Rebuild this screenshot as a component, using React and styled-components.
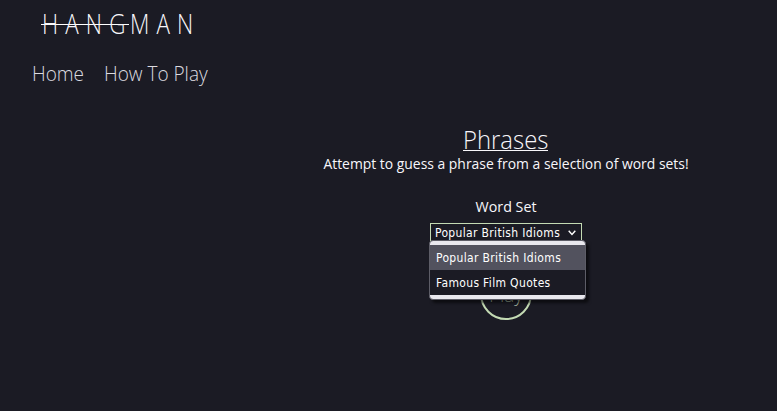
import React from "react";
import styled, { createGlobalStyle } from "styled-components";

const Global = createGlobalStyle`
  * { box-sizing: border-box; }
  body {
    margin: 0;
    background: #1b1b24;
    color: #f8f7fb;
    font-family: "Open Sans", "Noto Sans", sans-serif;
    overflow: hidden;
  }
`;
const Page = styled.div`
  height: 411px;
  display: flex;
  flex-direction: column;
`;
const Header = styled.header`
  height: 126px;
  padding: 4px 0 0 32px;
`;
const Logo = styled.div`
  height: 40px;
  padding-left: 9px;
  display: flex;
  font-size: 27px;
  font-weight: 300;
  line-height: 39px;
`;
const Struck = styled.span`
  width: 88px;
  padding-left: 1px;
  white-space: nowrap;
  background: linear-gradient(#fff, #fff) 0 20px / 100% 1px no-repeat;
`;
const Letters = styled.span`
  display: inline-block;
  letter-spacing: 8.6px;
  transform: scaleX(0.83);
  transform-origin: left;
`;
const Rest = styled.span`
  padding-left: 1px;
`;
const Nav = styled.nav`
  display: flex;
  gap: 21px;
  margin-top: 15px;
  transform: scaleX(0.95);
  transform-origin: left;
`;
const NavLink = styled.a`
  font-size: 20px;
  font-weight: 300;
  line-height: 29px;
  color: #dcdbe0;
  white-space: nowrap;
`;
const Main = styled.main`
  width: 400px;
  margin-left: 306px;
  display: flex;
  flex-direction: column;
  align-items: center;
`;
const Title = styled.h1`
  margin: 0;
  height: 25px;
  font-size: 25px;
  line-height: 27px;
  font-weight: 300;
  border-bottom: 1px solid #f8f7fb;
  transform: scaleX(0.955);
`;
const Text = styled.p`
  margin: ${(p) => p.$top}px 0 0;
  font-size: 15px;
  line-height: 20px;
  white-space: nowrap;
  transform: scaleX(${(p) => p.$squeeze});
`;
const Picker = styled.div`
  position: relative;
  margin-top: 7px;
  width: 152px;
  height: 19px;
  font: 12px/19px "DejaVu Sans Condensed", "DejaVu Sans", sans-serif;
  font-stretch: condensed;
  letter-spacing: 0.34px;
`;
const SelectBox = styled.div`
  height: 19px;
  border: 1px solid #c3dab3;
  padding: 1px 5px 0 4px;
  display: flex;
  justify-content: space-between;
  align-items: center;
  color: #fff;
  white-space: nowrap;
`;
const Arrow = styled.svg`
  margin-bottom: 1px;
`;
const Menu = styled.ul`
  position: absolute;
  z-index: 1;
  top: 17px;
  left: -1px;
  width: 157px;
  height: 60px;
  margin: 0;
  padding: 4px 0 3px;
  list-style: none;
  background: #e9e8ee;
  border: 1px solid #5d5d67;
  border-radius: 4px;
  box-shadow: 3px 3px 3px rgba(0, 0, 0, 0.55);
`;
const Option = styled.li`
  height: 25px;
  padding-left: 6px;
  line-height: 26px;
  color: #fff;
  background: ${(p) => (p.$active ? "#52525e" : "#1b1b24")};
`;
const PlayButton = styled.button`
  margin-top: 26px;
  width: 52px;
  height: 52px;
  padding: 3px 0 0;
  border: 2px solid #c3dab3;
  border-radius: 50%;
  background: none;
  color: #a9b9a2;
  font: 300 19px/45px "Open Sans", sans-serif;
`;

export default function App() {
  return (
    <Page>
      <Global />
      <Header>
        <Logo>
          <Struck><Letters>HANG</Letters></Struck>
          <Rest><Letters>MAN</Letters></Rest>
        </Logo>
        <Nav>
          <NavLink>Home</NavLink>
          <NavLink>How To Play</NavLink>
        </Nav>
      </Header>
      <Main>
        <Title>Phrases</Title>
        <Text $top={2} $squeeze={0.927}>Attempt to guess a phrase from a selection of word sets!</Text>
        <Text $top={23} $squeeze={0.95}>Word Set</Text>
        <Picker>
          <SelectBox>
            Popular British Idioms
            <Arrow width="8" height="6" viewBox="0 0 8 6" fill="none" stroke="#fff" strokeWidth="1.4"><path d="M.7 .8 4 4.5 7.3.8" /></Arrow>
          </SelectBox>
          <Menu>
            <Option $active>Popular British Idioms</Option>
            <Option>Famous Film Quotes</Option>
          </Menu>
        </Picker>
        <PlayButton>Play</PlayButton>
      </Main>
    </Page>
  );
}
